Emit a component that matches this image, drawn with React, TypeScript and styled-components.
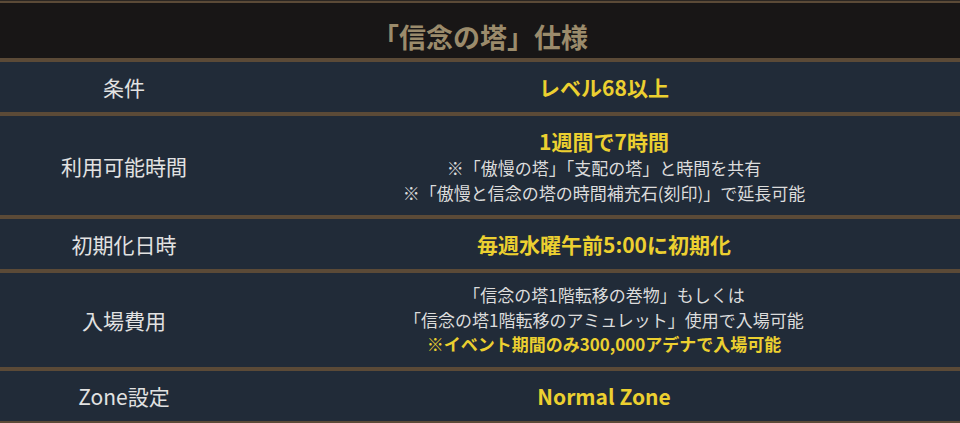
import * as React from 'react';
import styled, { createGlobalStyle } from 'styled-components';

const GlobalStyle = createGlobalStyle`
	body {
		margin: 0;
		background: #212b38;
		font-family: "Noto Sans CJK JP", "Noto Sans", sans-serif;
	}
`;

const BORDER = '#5b4a37';

type LineKind = 'main' | 'note' | 'strong';

interface SpecRow {
	label: string;
	lines: { text: string; kind: LineKind }[];
}

const rows: SpecRow[] = [
	{ label: '条件', lines: [{ text: 'レベル68以上', kind: 'main' }] },
	{
		label: '利用可能時間',
		lines: [
			{ text: '1週間で7時間', kind: 'main' },
			{ text: '※「傲慢の塔」「支配の塔」と時間を共有', kind: 'note' },
			{ text: '※「傲慢と信念の塔の時間補充石(刻印)」で延長可能', kind: 'note' }
		]
	},
	{ label: '初期化日時', lines: [{ text: '毎週水曜午前5:00に初期化', kind: 'main' }] },
	{
		label: '入場費用',
		lines: [
			{ text: '「信念の塔1階転移の巻物」もしくは', kind: 'note' },
			{ text: '「信念の塔1階転移のアミュレット」使用で入場可能', kind: 'note' },
			{ text: '※イベント期間のみ300,000アデナで入場可能', kind: 'strong' }
		]
	},
	{ label: 'Zone設定', lines: [{ text: 'Normal Zone', kind: 'main' }] }
];

const Table = styled.div`
	width: 960px;
	border-top: 1px solid #2b2622;
`;

const Header = styled.div`
	background: #181616;
	border-top: 2px solid ${BORDER};
	border-bottom: 4px solid ${BORDER};
	height: 55px;
	display: flex;
	align-items: flex-end;
	justify-content: center;
`;

const Title = styled.h2`
	margin: 0 0 3px;
	font-size: 27px;
	line-height: 36px;
	font-weight: 700;
	color: #9b8b6b;
`;

const Row = styled.div`
	display: grid;
	grid-template-columns: 248px 1fr;
	background: #212b38;
	border-bottom: 4px solid ${BORDER};
`;

const Label = styled.div`
	display: flex;
	align-items: center;
	justify-content: center;
	font-size: 21px;
	color: #e2e2e2;
`;

const Value = styled.div`
	display: flex;
	flex-direction: column;
	align-items: center;
	justify-content: center;
	padding: 10px 0;
	text-align: center;
`;

const Line = styled.div<{ $kind: LineKind }>`
	font-size: ${p => (p.$kind === 'main' ? '21px' : '17px')};
	line-height: ${p => (p.$kind === 'main' ? '30px' : '24.5px')};
	font-weight: ${p => (p.$kind === 'note' ? 400 : 700)};
	color: ${p => (p.$kind === 'note' ? '#dcdcdc' : '#ecd030')};
	white-space: nowrap;
`;

export default function App() {
	return (
		<>
			<GlobalStyle />
			<Table>
				<Header>
					<Title>「信念の塔」仕様</Title>
				</Header>
				{rows.map(row => (
					<Row key={row.label}>
						<Label>{row.label}</Label>
						<Value>
							{row.lines.map(line => (
								<Line key={line.text} $kind={line.kind}>{line.text}</Line>
							))}
						</Value>
					</Row>
				))}
			</Table>
		</>
	);
}
